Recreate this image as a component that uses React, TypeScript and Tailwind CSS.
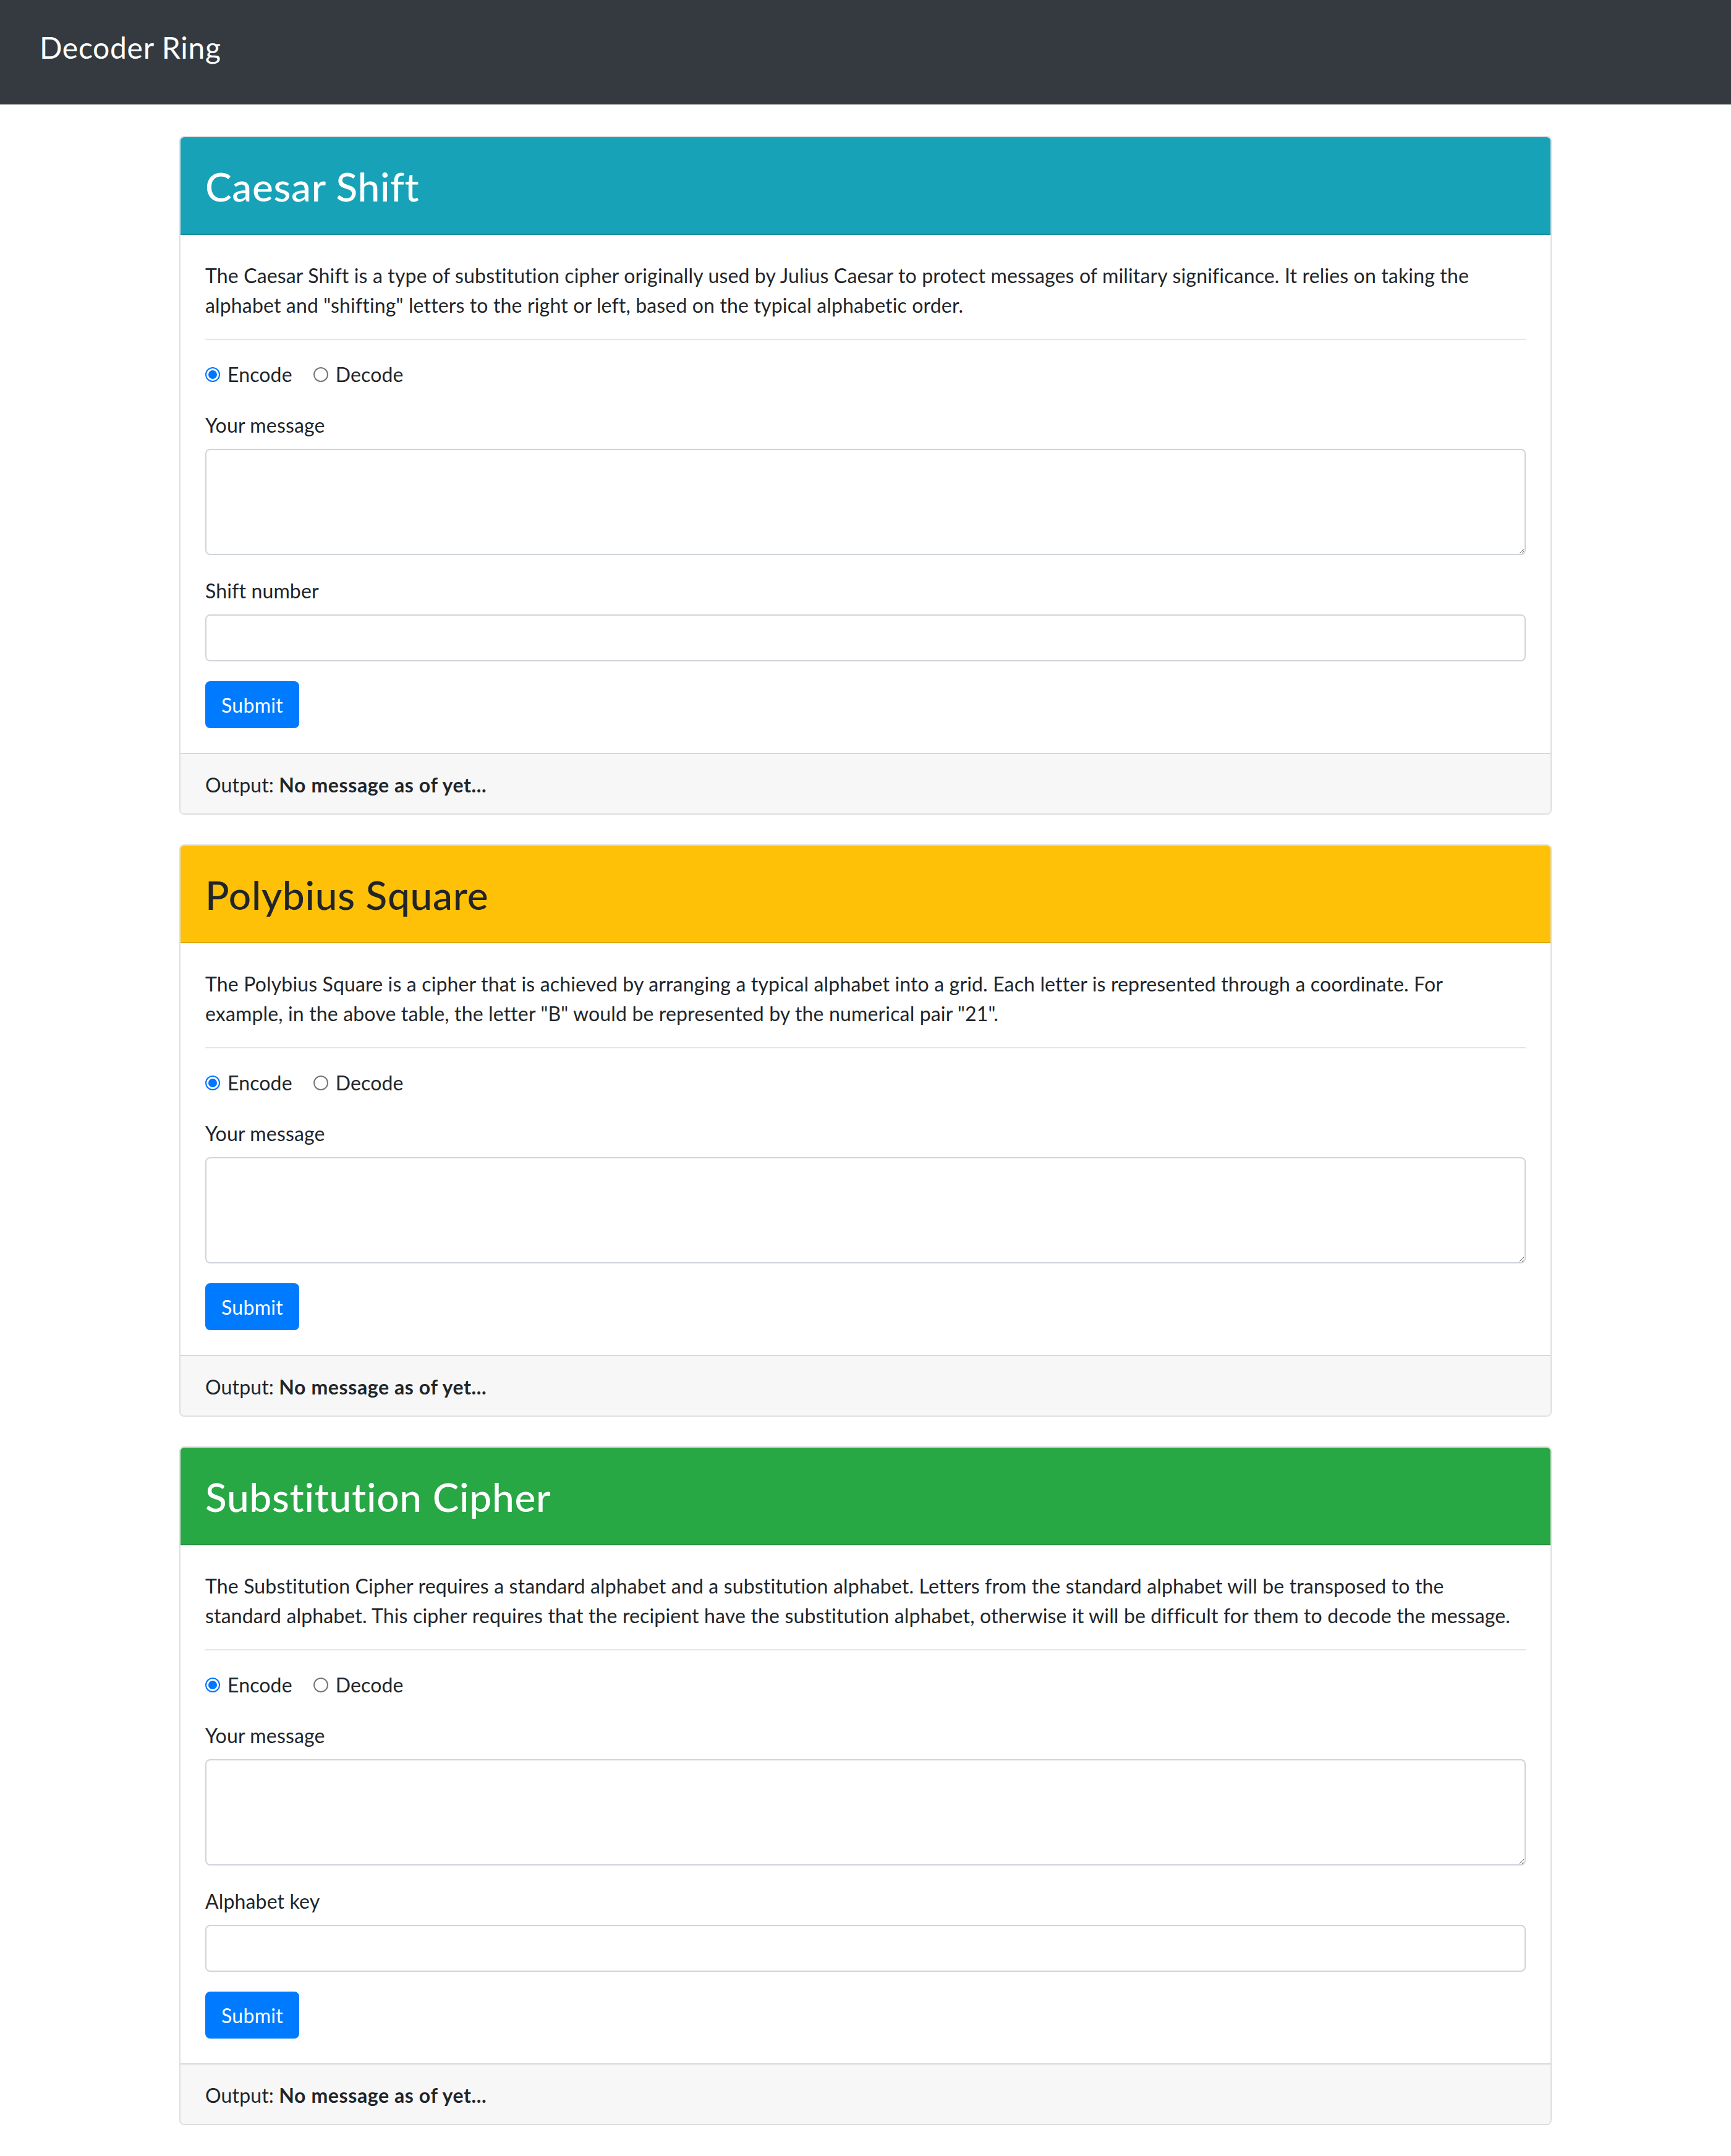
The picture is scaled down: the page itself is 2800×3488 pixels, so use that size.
import React from "react";

type Cipher = {
  title: string;
  headerClass: string;
  desc: string[];
  extraLabel: string | null;
};

const ciphers: Cipher[] = [
  {
    title: "Caesar Shift",
    headerClass: "bg-[#17a2b8] text-white",
    desc: [
      "The Caesar Shift is a type of substitution cipher originally used by Julius Caesar to protect messages of military significance. It relies on taking the",
      'alphabet and "shifting" letters to the right or left, based on the typical alphabetic order.',
    ],
    extraLabel: "Shift number",
  },
  {
    title: "Polybius Square",
    headerClass: "bg-[#ffc107] text-[#212529]",
    desc: [
      "The Polybius Square is a cipher that is achieved by arranging a typical alphabet into a grid. Each letter is represented through a coordinate. For",
      'example, in the above table, the letter "B" would be represented by the numerical pair "21".',
    ],
    extraLabel: null,
  },
  {
    title: "Substitution Cipher",
    headerClass: "bg-[#28a745] text-white",
    desc: [
      "The Substitution Cipher requires a standard alphabet and a substitution alphabet. Letters from the standard alphabet will be transposed to the",
      "standard alphabet. This cipher requires that the recipient have the substitution alphabet, otherwise it will be difficult for them to decode the message.",
    ],
    extraLabel: "Alphabet key",
  },
];

function Radio({ checked }: { checked: boolean }) {
  if (checked) {
    return (
      <span className="flex h-[24px] w-[24px] shrink-0 items-center justify-center rounded-full border-[2px] border-[#0075ff] bg-white">
        <span className="h-[14px] w-[14px] rounded-full bg-[#0075ff]" />
      </span>
    );
  }
  return (
    <span className="h-[24px] w-[24px] shrink-0 rounded-full border-[2px] border-[#767676] bg-white" />
  );
}

function CipherCard({ c }: { c: Cipher }) {
  return (
    <div className="mb-[48px] overflow-hidden rounded-[8px] border-[2px] border-[rgba(0,0,0,0.125)] bg-white">
      <div
        className={`border-b-[2px] border-[rgba(0,0,0,0.125)] px-[40px] pt-[42px] pb-[38px] ${c.headerClass}`}
      >
        <h2 className="text-[64px] leading-[76px] font-medium tracking-[0.7px]">{c.title}</h2>
      </div>
      <div className="p-[40px]">
        <p className="pt-[2px]">
          {c.desc[0]}
          <br />
          {c.desc[1]}
        </p>
        <hr className="mt-[30px] mb-[32px] border-0 border-t-[2px] border-[rgba(0,0,0,0.1)]" />
        <div className="mb-[32px] flex h-[48px] items-center">
          <label className="mr-[34px] flex items-center gap-[12px]">
            <Radio checked />
            <span>Encode</span>
          </label>
          <label className="flex items-center gap-[12px]">
            <Radio checked={false} />
            <span>Decode</span>
          </label>
        </div>
        <div className="mb-[32px]">
          <label className="mb-[14px] block pt-[2px]">Your message</label>
          <textarea
            rows={3}
            className="block h-[172px] w-full rounded-[8px] border-[2px] border-[#ced4da] bg-white px-[24px] py-[12px] text-[32px] leading-[48px] text-[#495057] outline-none"
          />
        </div>
        {c.extraLabel && (
          <div className="mb-[32px]">
            <label className="mb-[14px] block pt-[2px]">{c.extraLabel}</label>
            <input
              type="text"
              className="block h-[76px] w-full rounded-[8px] border-[2px] border-[#ced4da] bg-white px-[24px] py-[12px] text-[32px] leading-[48px] text-[#495057] outline-none"
            />
          </div>
        )}
        <button
          type="button"
          className="h-[76px] rounded-[8px] border-[2px] border-[#007bff] bg-[#007bff] px-[24px] pt-[2px] text-[32px] leading-[48px] tracking-[0.3px] text-white"
        >
          Submit
        </button>
      </div>
      <div className="border-t-[2px] border-[rgba(0,0,0,0.125)] bg-[#f7f7f7] px-[40px] pt-[26px] pb-[22px]">
        Output: <strong className="font-bold tracking-[0.6px]">No message as of yet...</strong>
      </div>
    </div>
  );
}

export default function App() {
  return (
    <div className="min-h-[3488px] bg-white font-[Lato,'Noto_Sans',sans-serif] text-[32px] leading-[48px] tracking-[0.15px] text-[#212529]">
      <nav className="h-[169px] bg-[#343a40] pl-[64px] pt-[41px]">
        <span className="text-[48px] leading-[72px] tracking-[0.7px] text-white">Decoder Ring</span>
      </nav>
      <main className="mx-auto w-[2220px] pt-[51px]">
        {ciphers.map((c) => (
          <CipherCard key={c.title} c={c} />
        ))}
      </main>
    </div>
  );
}
